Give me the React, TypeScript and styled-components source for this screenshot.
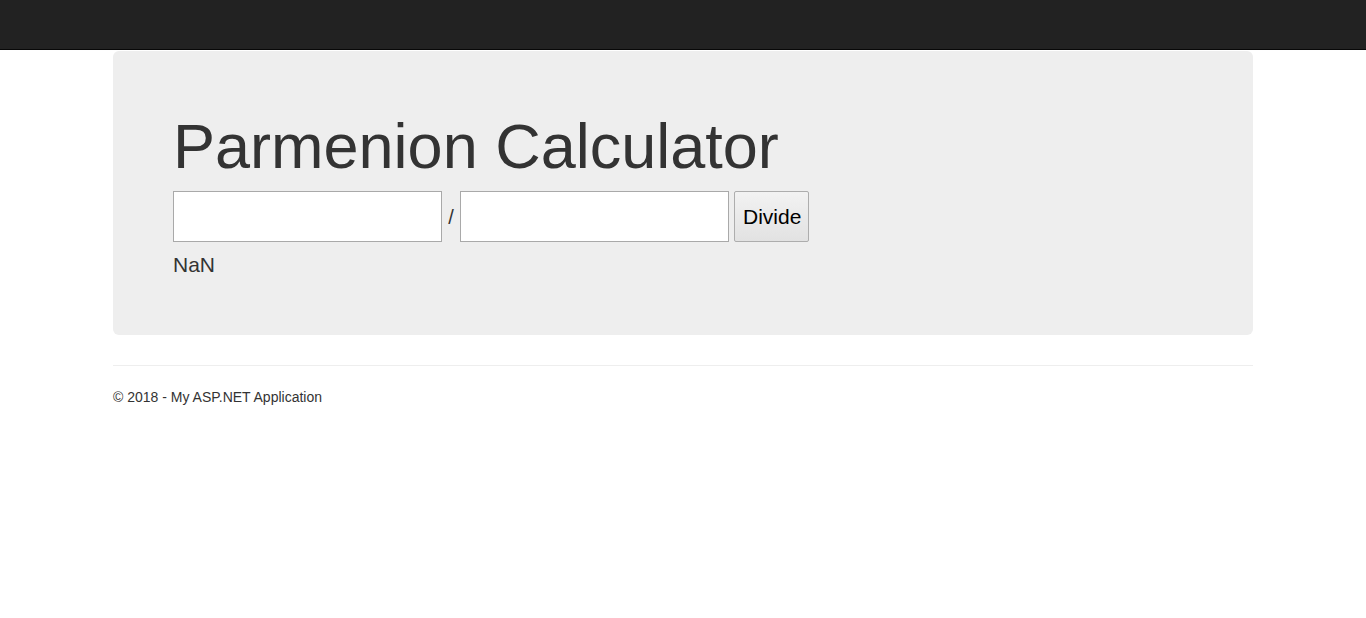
import React from "react";
import styled, { createGlobalStyle } from "styled-components";

const Global = createGlobalStyle`
  html, body { margin: 0; padding: 0; }
  body {
    font-family: "Liberation Sans", Arial, sans-serif;
    font-size: 14px;
    line-height: 1.428571;
    color: #333;
    background: #fff;
  }
  * { box-sizing: border-box; }
`;

const Navbar = styled.div`
  height: 50px;
  background: #222;
  border-bottom: 1px solid #080808;
`;

const Container = styled.div`
  width: 1140px;
  margin: 0 auto;
`;

const Jumbotron = styled.div`
  margin-top: 1px;
  background: #eee;
  border-radius: 6px;
  padding: 61px 60px 55px;
`;

const Title = styled.h1`
  margin: 0 0 10px;
  font-size: 63px;
  line-height: 1.1;
  font-weight: 500;
  color: #333;
`;

const FormRow = styled.div`
  display: flex;
  align-items: center;
  height: 51px;
`;

const NumberInput = styled.input`
  width: 269px;
  height: 51px;
  border: 1px solid #a9a9a9;
  background: #fff;
  font-family: inherit;
  font-size: 21px;
  padding: 0 4px;
  margin: 0;
`;

const Slash = styled.span`
  width: 18px;
  text-align: center;
  font-size: 20px;
  color: #333;
`;

const DivideButton = styled.button`
  margin-left: 5px;
  height: 51px;
  padding: 0 7px 0 8px;
  border: 1px solid #adadad;
  border-radius: 2px;
  background: linear-gradient(#f2f2f2, #e2e2e2);
  color: #000;
  font-family: inherit;
  font-size: 21px;
  cursor: pointer;
`;

const Result = styled.p`
  margin: 8px 0 0;
  font-size: 21px;
  line-height: 1.4;
  font-weight: 300;
  color: #333;
`;

const Rule = styled.hr`
  margin: 30px 0 21px;
  border: 0;
  border-top: 1px solid #eee;
`;

const Footer = styled.footer`
  p {
    margin: 0 0 10px;
    font-size: 14px;
    line-height: 20px;
  }
`;

export default function App() {
  const [a, setA] = React.useState("");
  const [b, setB] = React.useState("");
  const [result, setResult] = React.useState("NaN");
  return (
    <>
      <Global />
      <Navbar />
      <Container>
        <Jumbotron>
          <Title>Parmenion Calculator</Title>
          <FormRow>
            <NumberInput value={a} onChange={(e) => setA(e.target.value)} />
            <Slash>/</Slash>
            <NumberInput value={b} onChange={(e) => setB(e.target.value)} />
            <DivideButton
              onClick={() => setResult(String(parseFloat(a) / parseFloat(b)))}
            >
              Divide
            </DivideButton>
          </FormRow>
          <Result>{result}</Result>
        </Jumbotron>
        <Rule />
        <Footer>
          <p>© 2018 - My ASP.NET Application</p>
        </Footer>
      </Container>
    </>
  );
}
